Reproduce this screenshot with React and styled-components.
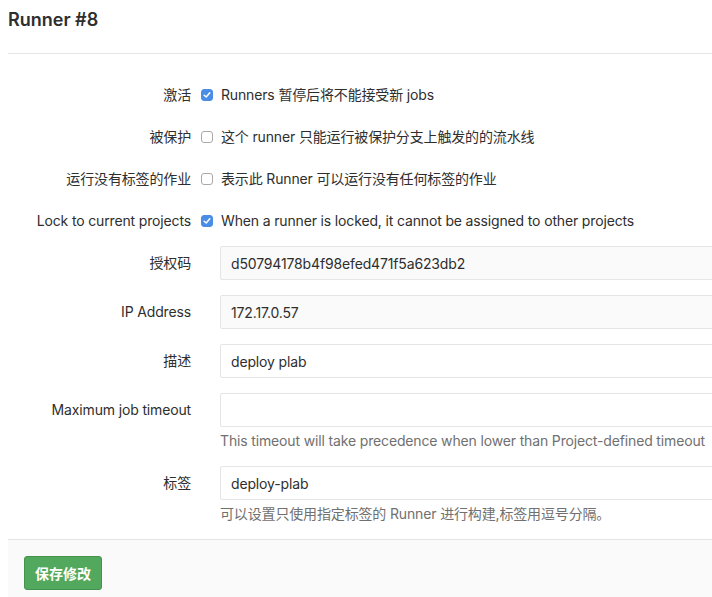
import React from 'react';
import styled, { createGlobalStyle } from 'styled-components';

const fontStack = `Inter, "Noto Sans CJK SC", sans-serif`

const GlobalStyle = createGlobalStyle`
  body {
    margin: 0;
    background: #fff;
    overflow: hidden;
    font-family: ${fontStack};
    font-size: 14px;
    letter-spacing: -0.15px;
    color: #2e2e2e;
  }
`

const Page = styled.div`
  width: 760px;
  padding-left: 8px;
`

const Title = styled.h3`
  margin: 9px 0 0;
  font-size: 18px;
  line-height: 22px;
  font-weight: 600;
  letter-spacing: 0;
  color: #2e2e2e;
`

const Divider = styled.hr`
  margin: 22px 0 24px;
  border: 0;
  border-top: 1px solid #e5e5e5;
`

const FormGroup = styled.div`
  display: grid;
  grid-template-columns: 183px 1fr;
  column-gap: ${(p) => (p.$check ? '10px' : '29px')};
  align-items: center;
  min-height: 34px;
  margin-bottom: ${(p) => (p.$check ? '8px' : '15px')};
`

const Label = styled.label`
  text-align: right;
  line-height: 20px;
  align-self: ${(p) => (p.$top ? 'start' : 'center')};
  padding-top: ${(p) => (p.$top ? '7px' : '0')};
`

const CheckRow = styled.div`
  display: flex;
  align-items: center;
  gap: 8px;
  line-height: 20px;
`

const Box = styled.span`
  width: 12px;
  height: 12px;
  box-sizing: border-box;
  border-radius: 3px;
  display: inline-flex;
  align-items: center;
  justify-content: center;
  background: ${(p) => (p.$checked ? '#4a8de6' : '#fff')};
  border: 1px solid ${(p) => (p.$checked ? '#4a8de6' : '#a9a9a9')};
`

const Control = styled.div`
  display: flex;
  flex-direction: column;
`

const Input = styled.div`
  height: 34px;
  box-sizing: border-box;
  padding: 0 10px;
  display: flex;
  align-items: center;
  border: 1px solid #e5e5e5;
  border-radius: 2px;
  background: ${(p) => (p.$readOnly ? '#fafafa' : '#fff')};
  color: #2e2e2e;
`

const Help = styled.div`
  margin-top: 4px;
  line-height: 20px;
  color: #707070;
`

const Footer = styled.div`
  margin-top: 14px;
  border-top: 1px solid #e5e5e5;
  background: #fafafa;
  padding: 16px 16px 20px;
`

const SaveButton = styled.button`
  height: 34px;
  width: 78px;
  border: 1px solid #43934d;
  border-radius: 3px;
  background: #52a85c;
  color: #fff;
  font-family: ${fontStack};
  font-size: 14px;
  font-weight: bold;
  padding: 0;
`

const Checkbox = ({ checked }) => (
  <Box $checked={checked}>
    {checked && (
      <svg width="8" height="8" viewBox="0 0 8 8">
        <path d="M1.2 4.2 L3.2 6 L6.8 1.8" fill="none" stroke="#fff" strokeWidth="1.5" strokeLinecap="round" strokeLinejoin="round" />
      </svg>
    )}
  </Box>
)

const checks = [
  { label: '激活', checked: true, text: 'Runners 暂停后将不能接受新 jobs' },
  { label: '被保护', checked: false, text: '这个 runner 只能运行被保护分支上触发的的流水线' },
  { label: '运行没有标签的作业', checked: false, text: '表示此 Runner 可以运行没有任何标签的作业' },
  { label: 'Lock to current projects', checked: true, text: 'When a runner is locked, it cannot be assigned to other projects' },
]

const fields = [
  { label: '授权码', value: 'd50794178b4f98efed471f5a623db2', readOnly: true },
  { label: 'IP Address', value: '172.17.0.57', readOnly: true },
  { label: '描述', value: 'deploy plab' },
  { label: 'Maximum job timeout', value: '', help: 'This timeout will take precedence when lower than Project-defined timeout' },
  { label: '标签', value: 'deploy-plab', help: '可以设置只使用指定标签的 Runner 进行构建,标签用逗号分隔。' },
]

const App = () => {
  return (
    <Page>
      <GlobalStyle />
      <Title>Runner #8</Title>
      <Divider />
      {checks.map((c) => (
        <FormGroup $check key={c.label}>
          <Label>{c.label}</Label>
          <CheckRow>
            <Checkbox checked={c.checked} />
            <span>{c.text}</span>
          </CheckRow>
        </FormGroup>
      ))}
      {fields.map((f) => (
        <FormGroup key={f.label}>
          <Label $top>{f.label}</Label>
          <Control>
            <Input $readOnly={f.readOnly}>{f.value}</Input>
            {f.help && <Help>{f.help}</Help>}
          </Control>
        </FormGroup>
      ))}
      <Footer>
        <SaveButton>保存修改</SaveButton>
      </Footer>
    </Page>
  );
};

export default App;
